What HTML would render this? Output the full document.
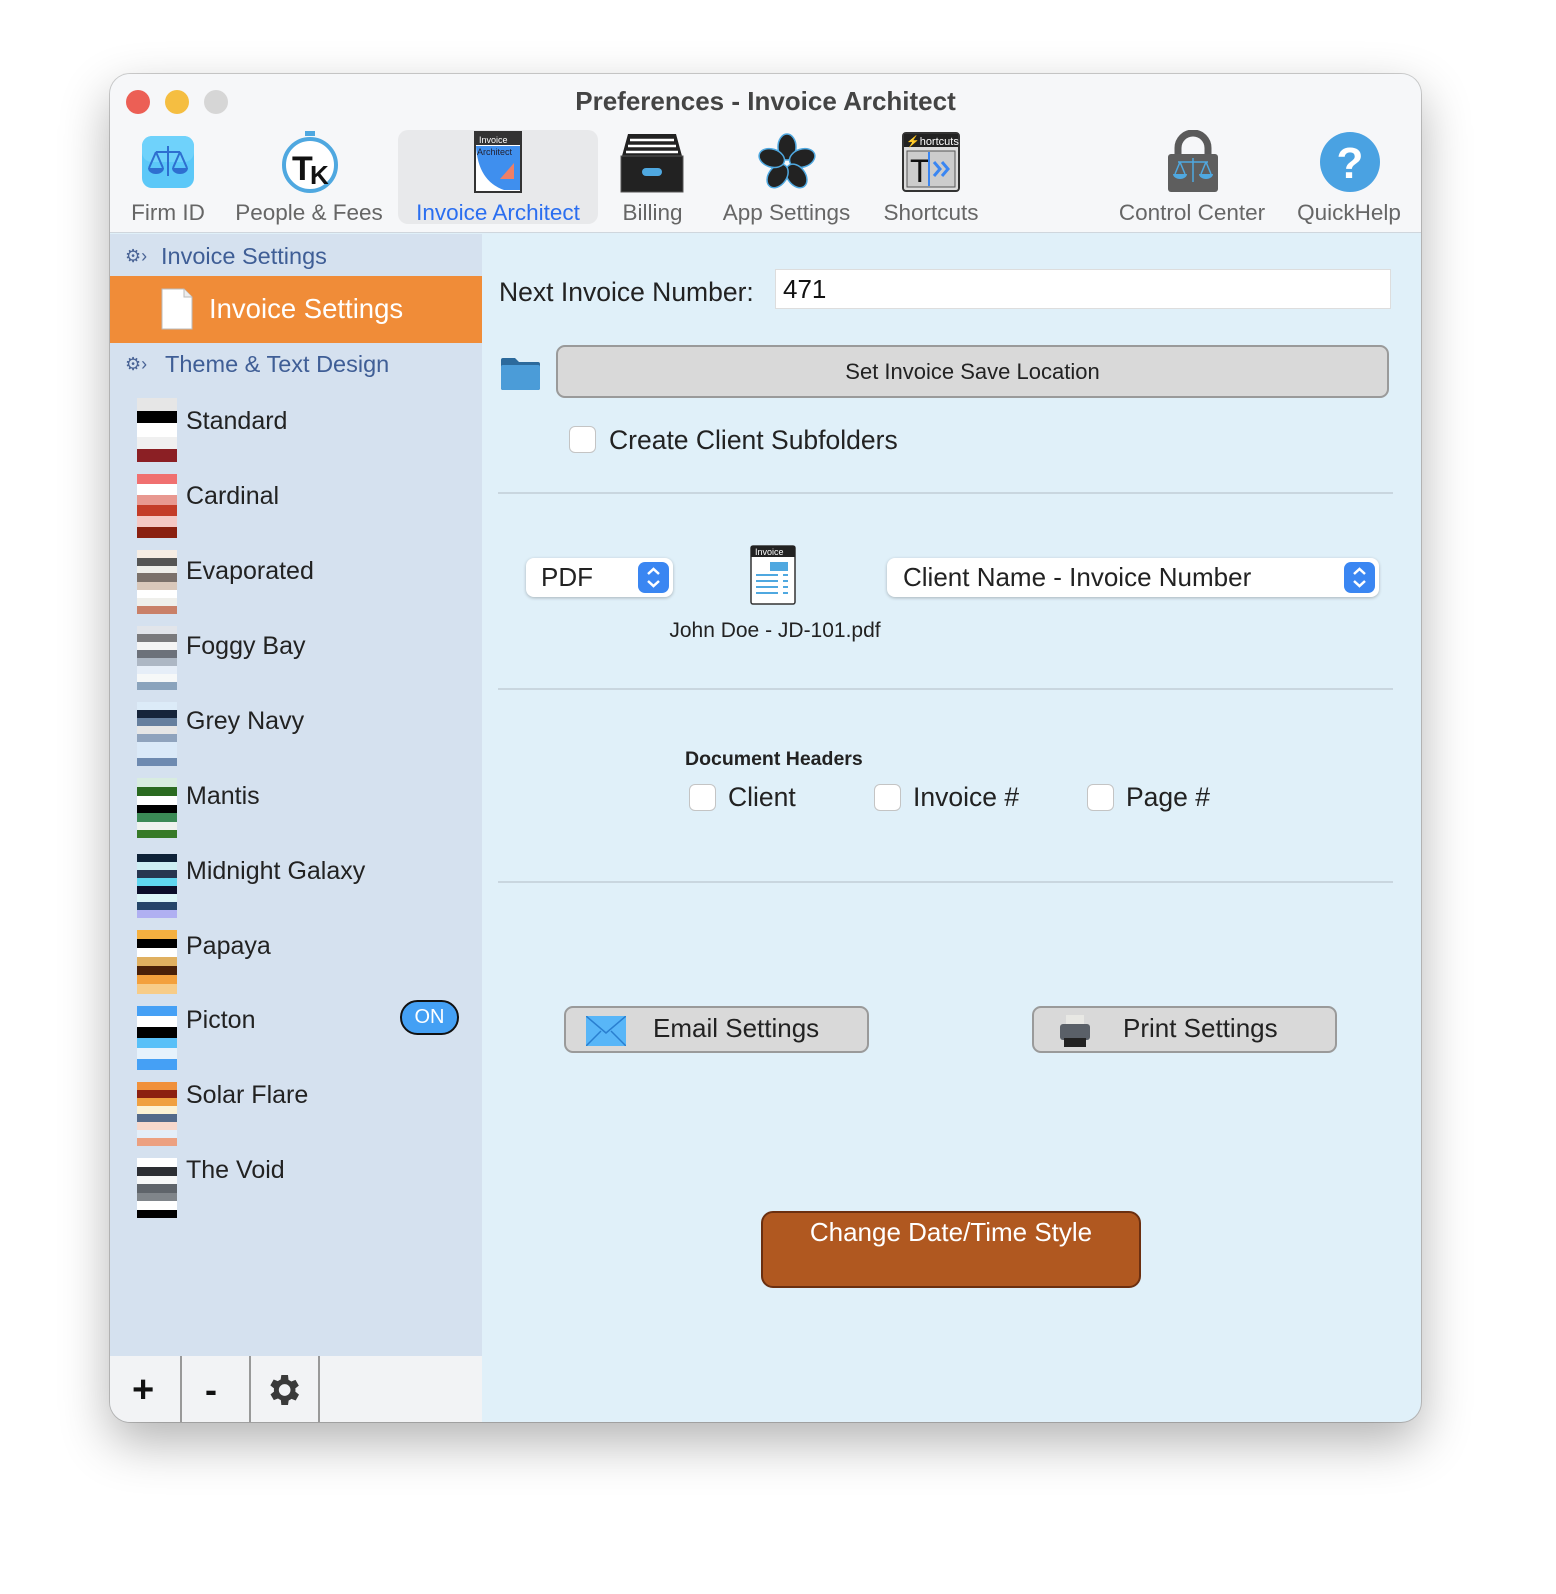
<!DOCTYPE html>
<html><head><meta charset="utf-8"><style>
*{margin:0;padding:0;box-sizing:border-box}
body{width:1556px;height:1594px;background:#fff;position:relative;overflow:hidden;font-family:"Liberation Sans",sans-serif;color:#222}
.a{position:absolute}
#win{position:absolute;left:110px;top:74px;width:1311px;height:1348px;border-radius:20px;overflow:hidden;background:#e0f0f9;box-shadow:0 20px 50px rgba(0,0,0,.3),0 0 0 1px rgba(0,0,0,.18)}
.tl{position:absolute;top:16px;width:24px;height:24px;border-radius:50%}
.tb{position:absolute;top:126px;font-size:22.5px;color:#666;text-align:center;white-space:nowrap}
.sw{position:absolute;left:27px;width:40px}
.lb{position:absolute;left:76px;font-size:25px;color:#222}
.btn{position:absolute;background:#d9d9d9;border:2px solid #9a9a9a;border-radius:9px;font-size:26px;color:#222}
.cb{position:absolute;width:27px;height:27px;background:#fff;border:1px solid #c4c4c4;border-radius:6px}
.sep{position:absolute;left:388px;width:895px;height:2px;background:#c9d6df}
.pop{position:absolute;background:#fff;border-radius:8px;box-shadow:0 1px 3px rgba(0,0,0,.25);font-size:26px;color:#222}
.ar{position:absolute;right:4px;top:4px;width:31px;height:31px;border-radius:7px;background:#3a86f2;color:#fff}
</style></head><body>
<div id="win">
 <div class="a" style="left:0;top:0;width:1311px;height:159px;background:#f6f7f9;border-bottom:1px solid #cfd6dd"></div>
 <div class="tl" style="left:16px;background:#ec5f55"></div>
 <div class="tl" style="left:55px;background:#f5be41"></div>
 <div class="tl" style="left:94px;background:#d6d6d6"></div>
 <div class="a" style="left:0;width:1311px;top:12px;text-align:center;font-size:26px;font-weight:bold;color:#444;padding-left:0">Preferences - Invoice Architect</div>
 <div class="a" style="left:288px;top:56px;width:200px;height:94px;background:#e8e9eb;border-radius:10px"></div>
 <svg class="a" style="left:30px;top:60px" width="56" height="56" viewBox="0 0 56 56"><rect x="2" y="2" width="52" height="52" rx="10" fill="#5cc8f8"/><rect x="2" y="2" width="52" height="26" rx="10" fill="#6fd2fb"/><path d="M28 12v30M16 18h24M16 18l-7 16M16 18l7 16M40 18l-7 16M40 18l7 16" stroke="#2e6fd0" stroke-width="2" fill="none"/><path d="M8 34h16a8 6 0 0 1-16 0zM32 34h16a8 6 0 0 1-16 0z" fill="#2e6fd0"/></svg>
 <svg class="a" style="left:170px;top:56px" width="60" height="64" viewBox="0 0 60 64"><rect x="25" y="1" width="10" height="5" fill="#4fa8e0"/><circle cx="30" cy="35" r="26" fill="#fff" stroke="#4fa8e0" stroke-width="4"/><text x="12" y="50" font-family="Liberation Sans" font-weight="bold" font-size="34" fill="#111">T</text><text x="30" y="54" font-family="Liberation Sans" font-weight="bold" font-size="26" fill="#111">K</text></svg>
 <svg class="a" style="left:364px;top:57px" width="48" height="62" viewBox="0 0 48 62"><rect x="1" y="1" width="46" height="60" fill="#fff" stroke="#333" stroke-width="2"/><rect x="2" y="2" width="44" height="12" fill="#333"/><text x="5" y="12" font-size="9" fill="#fff" font-family="Liberation Sans">Invoice</text><path d="M2 15h44v44H30Q4 50 2 15z" fill="#3f8fee"/><text x="3" y="24" font-size="9" fill="#223" font-family="Liberation Sans">Architect</text><path d="M40 32v16H26z" fill="#ee7f66"/></svg>
 <svg class="a" style="left:510px;top:58px" width="64" height="62" viewBox="0 0 64 62"><path d="M8 2h48l6 22H2z" fill="#222"/><path d="M10 8h44M8 14h48M6 20h52" stroke="#fff" stroke-width="2.5"/><rect x="1" y="24" width="62" height="36" fill="#222" stroke="#555"/><rect x="22" y="36" width="20" height="8" rx="4" fill="#4fa8e0"/></svg>
 <svg class="a" style="left:646px;top:58px" width="62" height="62" viewBox="0 0 62 62"><g fill="#222" stroke="#4fa8e0" stroke-width="1.5"><ellipse cx="31" cy="15" rx="9" ry="13"/><ellipse cx="31" cy="15" rx="9" ry="13" transform="rotate(72 31 31)"/><ellipse cx="31" cy="15" rx="9" ry="13" transform="rotate(144 31 31)"/><ellipse cx="31" cy="15" rx="9" ry="13" transform="rotate(216 31 31)"/><ellipse cx="31" cy="15" rx="9" ry="13" transform="rotate(288 31 31)"/></g></svg>
 <svg class="a" style="left:792px;top:58px" width="58" height="60" viewBox="0 0 58 60"><rect x="1" y="1" width="56" height="58" rx="3" fill="#ddd" stroke="#333" stroke-width="2"/><rect x="2" y="2" width="54" height="13" fill="#222"/><text x="4" y="13" font-size="11" fill="#fff" font-family="Liberation Sans">⚡hortcuts</text><rect x="5" y="19" width="48" height="36" fill="#ccc" stroke="#555"/><text x="8" y="50" font-size="32" fill="#111" font-family="Liberation Sans">T</text><path d="M27 20v34" stroke="#3a86f2" stroke-width="2"/><path d="M32 30l6 7-6 7M40 30l6 7-6 7" stroke="#3a86f2" stroke-width="3" fill="none"/></svg>
 <svg class="a" style="left:1056px;top:56px" width="54" height="64" viewBox="0 0 54 64"><path d="M12 26V18a15 15 0 0 1 30 0v8" stroke="#5a5a5a" stroke-width="7" fill="none"/><rect x="2" y="24" width="50" height="38" rx="3" fill="#5e5e5e"/><path d="M27 28v24M12 32h30M14 32l-5 12M14 32l5 12M40 32l-5 12M40 32l5 12" stroke="#4fa8e0" stroke-width="1.5"/><path d="M7 44h14a7 5 0 0 1-14 0zM33 44h14a7 5 0 0 1-14 0z" fill="#4fa8e0"/></svg>
 <svg class="a" style="left:1209px;top:57px" width="62" height="62" viewBox="0 0 62 62"><circle cx="31" cy="31" r="30" fill="#4aa2e2"/><text x="31" y="47" text-anchor="middle" font-family="Liberation Sans" font-weight="bold" font-size="44" fill="#fff">?</text></svg>
 <div class="tb" style="left:18px;width:80px">Firm ID</div>
 <div class="tb" style="left:120px;width:158px">People &amp; Fees</div>
 <div class="tb" style="left:288px;width:200px;color:#2a6ef0">Invoice Architect</div>
 <div class="tb" style="left:503px;width:79px">Billing</div>
 <div class="tb" style="left:600px;width:153px">App Settings</div>
 <div class="tb" style="left:763px;width:116px">Shortcuts</div>
 <div class="tb" style="left:996px;width:172px">Control Center</div>
 <div class="tb" style="left:1180px;width:118px">QuickHelp</div>

 <div class="a" style="left:0;top:160px;width:372px;height:1122px;background:#d5e1ef"></div>
 <div class="a" style="left:15px;top:172px;font-size:18px;color:#4a6496">⚙›</div>
 <div class="a" style="left:51px;top:169px;font-size:23.5px;color:#3f5e96">Invoice Settings</div>
 <div class="a" style="left:0;top:202px;width:372px;height:67px;background:#f08c38"></div>
 <svg class="a" style="left:51px;top:214px" width="32" height="42" viewBox="0 0 32 42"><path d="M1 1h22l8 8v32H1z" fill="#fff" stroke="#bbb"/><path d="M23 1v8h8" fill="#eee" stroke="#bbb"/></svg>
 <div class="a" style="left:99px;top:219px;font-size:27.5px;color:#fff">Invoice Settings</div>
 <div class="a" style="left:15px;top:280px;font-size:18px;color:#4a6496">⚙›</div>
 <div class="a" style="left:55px;top:277px;font-size:23.5px;color:#3f5e96">Theme &amp; Text Design</div>

 <div class="sw" style="top:324px;height:64px;background:linear-gradient(#e6e6e6 0 13px,#000 13px 25px,#fff 25px 39px,#f0f0f0 39px 51px,#8b1f24 51px)"></div>
 <div class="lb" style="top:333px">Standard</div>
 <div class="sw" style="top:400px;height:64px;background:linear-gradient(#f07070 0 10px,#fff 10px 21px,#e89890 21px 31px,#c43c28 31px 42px,#f5c8c4 42px 53px,#8a2010 53px)"></div>
 <div class="lb" style="top:408px">Cardinal</div>
 <div class="sw" style="top:476px;height:64px;background:linear-gradient(#f6ede4 0 8px,#555 8px 16px,#efefeb 16px 23px,#7b716b 23px 32px,#d9c8bb 32px 40px,#fff 40px 48px,#efefeb 48px 56px,#c98068 56px)"></div>
 <div class="lb" style="top:483px">Evaporated</div>
 <div class="sw" style="top:552px;height:64px;background:linear-gradient(#e2e5ea 0 8px,#7a7a7c 8px 16px,#f4f4f4 16px 24px,#6c717a 24px 32px,#adb7c4 32px 40px,#e6eef8 40px 48px,#f6f8f8 48px 56px,#8aa3bc 56px)"></div>
 <div class="lb" style="top:558px">Foggy Bay</div>
 <div class="sw" style="top:628px;height:64px;background:linear-gradient(#dcebf8 0 8px,#16243a 8px 16px,#667f9e 16px 24px,#e6e6e6 24px 32px,#8fa3bd 32px 40px,#dae9f8 40px 56px,#6e8ab0 56px)"></div>
 <div class="lb" style="top:633px">Grey Navy</div>
 <div class="sw" style="top:704px;height:60px;background:linear-gradient(#d8ece0 0 9px,#2a6a20 9px 18px,#fff 18px 27px,#000 27px 35px,#3b8a55 35px 44px,#eef2ee 44px 52px,#377a28 52px)"></div>
 <div class="lb" style="top:708px">Mantis</div>
 <div class="sw" style="top:780px;height:64px;background:linear-gradient(#0e2238 0 8px,#cdeef3 8px 16px,#273550 16px 24px,#5fd6f0 24px 32px,#0c0e2a 32px 40px,#dcf6f8 40px 48px,#254569 48px 56px,#b0b0f2 56px)"></div>
 <div class="lb" style="top:783px">Midnight Galaxy</div>
 <div class="sw" style="top:856px;height:64px;background:linear-gradient(#f5b040 0 9px,#000 9px 18px,#fff 18px 27px,#e0b060 27px 36px,#4a2008 36px 45px,#f3a03c 45px 54px,#f7cc88 54px)"></div>
 <div class="lb" style="top:858px">Papaya</div>
 <div class="sw" style="top:932px;height:64px;background:linear-gradient(#45a0f5 0 10px,#fff 10px 21px,#000 21px 32px,#58c0f8 32px 42px,#e6f2fc 42px 53px,#45a0f5 53px)"></div>
 <div class="lb" style="top:932px">Picton</div>
 <div class="a" style="left:290px;top:926px;width:59px;height:35px;border:2px solid #111;border-radius:18px;background:#44a0f4;color:#fff;font-size:20px;text-align:center;line-height:31px">ON</div>
 <div class="sw" style="top:1008px;height:64px;background:linear-gradient(#f0903a 0 8px,#8c2010 8px 16px,#f0a040 16px 24px,#fcf2d4 24px 32px,#546a8a 32px 40px,#f7d8cc 40px 48px,#e4eef8 48px 56px,#eca080 56px)"></div>
 <div class="lb" style="top:1007px">Solar Flare</div>
 <div class="sw" style="top:1084px;height:60px;background:linear-gradient(#fff 0 9px,#2c2e33 9px 18px,#f7f8f8 18px 26px,#5f646a 26px 35px,#80858a 35px 43px,#fff 43px 52px,#000 52px)"></div>
 <div class="lb" style="top:1082px">The Void</div>

 <div class="a" style="left:0;top:1282px;width:372px;height:66px;background:#f2f3f5"></div>
 <div class="a" style="left:70px;top:1282px;width:2px;height:66px;background:#999"></div>
 <div class="a" style="left:139px;top:1282px;width:2px;height:66px;background:#999"></div>
 <div class="a" style="left:208px;top:1282px;width:2px;height:66px;background:#999"></div>
 <div class="a" style="left:22px;top:1295px;font-size:38px;font-weight:bold;color:#111">+</div>
 <div class="a" style="left:95px;top:1295px;font-size:36px;font-weight:bold;color:#111">-</div>
 <svg class="a" style="left:153px;top:1296px" width="40" height="40" viewBox="0 0 24 24"><path fill="#3a3a3a" d="M19.4 13a7.5 7.5 0 0 0 0-2l2.1-1.6-2-3.5-2.5 1a7 7 0 0 0-1.7-1L15 3h-4l-.4 2.7a7 7 0 0 0-1.7 1l-2.5-1-2 3.5L6.6 11a7.5 7.5 0 0 0 0 2l-2.1 1.6 2 3.5 2.5-1a7 7 0 0 0 1.7 1L11 21h4l.4-2.7a7 7 0 0 0 1.7-1l2.5 1 2-3.5zM13 15.5A3.5 3.5 0 1 1 13 8.5a3.5 3.5 0 0 1 0 7z"/></svg>

 <div class="a" style="left:389px;top:203px;font-size:26.5px;color:#222">Next Invoice Number:</div>
 <div class="a" style="left:665px;top:195px;width:616px;height:40px;background:#fff;border:1px solid #ddd;font-size:26px;padding:4px 7px;color:#111">471</div>
 <svg class="a" style="left:389px;top:283px" width="43" height="34" viewBox="0 0 43 34"><path d="M2 3a2 2 0 0 1 2-2h12l4 4h19a2 2 0 0 1 2 2v24a2 2 0 0 1-2 2H4a2 2 0 0 1-2-2z" fill="#2c6a9c"/><rect x="2" y="8" width="39" height="25" rx="2" fill="#4b9cd8"/></svg>
 <div class="btn" style="left:446px;top:271px;width:833px;height:53px;font-size:22px;text-align:center;line-height:49px">Set Invoice Save Location</div>
 <div class="cb" style="left:459px;top:352px"></div>
 <div class="a" style="left:499px;top:351px;font-size:26.5px">Create Client Subfolders</div>
 <div class="sep" style="top:418px"></div>

 <div class="pop" style="left:416px;top:484px;width:147px;height:39px;padding:4px 15px">PDF<div class="ar"><svg width="31" height="31" viewBox="0 0 31 31"><path d="M10 12l5.5-5 5.5 5M10 19l5.5 5 5.5-5" stroke="#fff" stroke-width="2.5" fill="none"/></svg></div></div>
 <svg class="a" style="left:640px;top:471px" width="46" height="60" viewBox="0 0 46 60"><rect x="1" y="1" width="44" height="58" rx="2" fill="#fff" stroke="#333" stroke-width="1.5"/><rect x="1" y="1" width="44" height="11" fill="#222"/><text x="5" y="10" font-size="9" fill="#fff" font-family="Liberation Sans">Invoice</text><rect x="20" y="17" width="18" height="9" fill="#4fa8e0"/><path d="M6 30h22M6 36h22M6 42h22M6 48h22M33 30h5M33 36h5M33 42h5M33 48h5" stroke="#4fa8e0" stroke-width="2"/></svg>
 <div class="pop" style="left:777px;top:484px;width:492px;height:39px;padding:4px 16px">Client Name - Invoice Number<div class="ar"><svg width="31" height="31" viewBox="0 0 31 31"><path d="M10 12l5.5-5 5.5 5M10 19l5.5 5 5.5-5" stroke="#fff" stroke-width="2.5" fill="none"/></svg></div></div>
 <div class="a" style="left:525px;top:545px;width:280px;text-align:center;font-size:21px;color:#222">John Doe - JD-101.pdf</div>
 <div class="sep" style="top:614px"></div>

 <div class="a" style="left:575px;top:674px;font-size:19.5px;font-weight:bold;color:#222">Document Headers</div>
 <div class="cb" style="left:579px;top:710px"></div><div class="a" style="left:618px;top:708px;font-size:26.5px">Client</div>
 <div class="cb" style="left:764px;top:710px"></div><div class="a" style="left:803px;top:708px;font-size:26.5px">Invoice #</div>
 <div class="cb" style="left:977px;top:710px"></div><div class="a" style="left:1016px;top:708px;font-size:26.5px">Page #</div>
 <div class="sep" style="top:807px"></div>

 <div class="btn" style="left:454px;top:932px;width:305px;height:47px;padding:5px 0 0 87px">Email Settings</div>
 <svg class="a" style="left:476px;top:942px" width="40" height="30" viewBox="0 0 40 30"><rect width="40" height="30" fill="#58b6f8"/><path d="M0 0l20 17L40 0M0 30l15-15M40 30L25 15" stroke="#2a7fd0" stroke-width="1.5" fill="none"/></svg>
 <div class="btn" style="left:922px;top:932px;width:305px;height:47px;padding:5px 0 0 89px">Print Settings</div>
 <svg class="a" style="left:948px;top:940px" width="34" height="34" viewBox="0 0 34 34"><rect x="8" y="1" width="18" height="10" fill="#e8e8e4"/><rect x="2" y="10" width="30" height="16" rx="3" fill="#5a6068"/><rect x="6" y="24" width="22" height="9" fill="#222"/></svg>

 <div class="a" style="left:651px;top:1137px;width:380px;height:77px;background:#b05820;border:2px solid #6b2f10;border-radius:12px;color:#fff;font-size:26px;text-align:center;padding-top:4px">Change Date/Time Style</div>
</div>
</body></html>
